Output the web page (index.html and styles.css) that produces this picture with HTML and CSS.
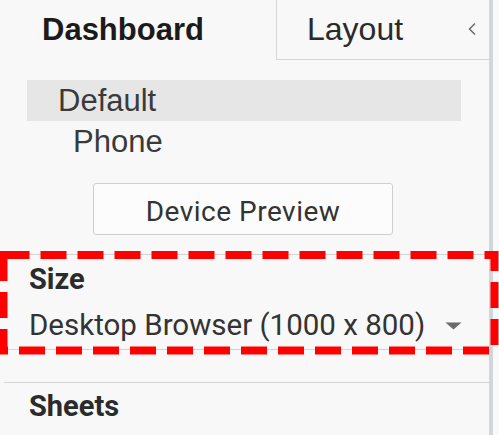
FILE: index.html
```html
<!DOCTYPE html>
<html lang="en">
<head>
<meta charset="utf-8">
<title>Dashboard pane</title>
<link rel="stylesheet" href="styles.css">
</head>
<body>
<div class="window">
  <div class="panel">
    <div class="tabs">
      <div class="tab tab-active">Dashboard</div>
      <div class="tab tab-layout">
        <span>Layout</span>
        <svg class="chev" width="10" height="14" viewBox="0 0 10 14"><path d="M8 1.5 L2.5 7 L8 12.5" fill="none" stroke="#666" stroke-width="1.4"/></svg>
      </div>
    </div>
    <div class="devices">
      <div class="device device-selected">Default</div>
      <div class="device device-sub">Phone</div>
    </div>
    <div class="preview-row">
      <button class="preview">Device Preview</button>
    </div>
    <div class="section section-size">
      <div class="section-title">Size</div>
      <div class="select">
        <span>Desktop Browser (1000 x 800)</span>
        <svg class="caret" width="17" height="8" viewBox="0 0 17 8"><path d="M0.5 0.5 H16.5 L8.5 7.5 Z" fill="#6a6a6a"/></svg>
      </div>
    </div>
    <div class="section section-sheets">
      <div class="section-title">Sheets</div>
    </div>
  </div>
  <div class="scrollbar"></div>
  <div class="spacer"></div>
  <svg class="annotation" width="499" height="435" viewBox="0 0 499 435">
    <rect x="3.5" y="255" width="491" height="95.5" fill="none" stroke="#ff0000" stroke-width="8" stroke-dasharray="26 11"/>
  </svg>
</div>
</body>
</html>
```

FILE: styles.css
```css
html, body {
  margin: 0;
  padding: 0;
}
body {
  width: 499px;
  height: 435px;
  overflow: hidden;
  background: #f8f8f8;
  color: #333;
}
.window {
  position: relative;
  display: flex;
  width: 499px;
  height: 435px;
}
.panel {
  width: 489px;
  display: flex;
  flex-direction: column;
  background: #f8f8f8;
}
.scrollbar {
  width: 4px;
  background: #d2d6da;
}
.spacer {
  flex: 1;
  background: #f9f9f9;
}
.tabs {
  display: flex;
  height: 60px;
}
.tab {
  box-sizing: border-box;
  height: 60px;
  font-family: "Liberation Sans", Arial, sans-serif;
  font-size: 31px;
}
.tab-active {
  width: 276px;
  padding-left: 42px;
  line-height: 60px;
  font-weight: bold;
  color: #1b1b1b;
}
.tab-layout {
  flex: 1;
  display: flex;
  align-items: center;
  padding-left: 30px;
  padding-right: 12px;
  border-left: 1px solid #d6d6d6;
  border-bottom: 1px solid #d6d6d6;
  line-height: 59px;
  font-size: 32px;
  color: #2a2a2a;
}
.tab-layout span {
  flex: 1;
}
.chev {
  margin-top: -1px;
}
.devices {
  margin-top: 20px;
  display: flex;
  flex-direction: column;
}
.device {
  height: 41px;
  line-height: 41px;
  margin: 0 28px 0 27px;
  font-family: "Liberation Sans", Arial, sans-serif;
  font-size: 31px;
  color: #3a3a3a;
}
.device-selected {
  background: #e6e6e6;
  padding-left: 31px;
}
.device-sub {
  padding-left: 46px;
}
.preview-row {
  margin-top: 21px;
  padding-left: 93px;
}
.preview {
  box-sizing: border-box;
  width: 300px;
  height: 52px;
  padding: 4px 0 0 0;
  border: 1px solid #cfcfcf;
  border-radius: 3px;
  background: #fcfcfc;
  font-family: Roboto, "Liberation Sans", sans-serif;
  font-size: 28px;
  letter-spacing: 0.5px;
  color: #333;
}
.section {
  margin-left: 4px;
  border-top: 1px solid #d3d3d3;
}
.section-size {
  margin-top: 19px;
  padding-top: 7px;
  padding-bottom: 4px;
  border-bottom: 1px solid #d3d3d3;
}
.section-title {
  padding-left: 25px;
  height: 34px;
  line-height: 34px;
  font-family: Roboto, "Liberation Sans", sans-serif;
  font-weight: bold;
  font-size: 29px;
  color: #2b2b2b;
}
.select {
  display: flex;
  align-items: center;
  margin-top: 9px;
  padding-left: 25px;
  height: 40px;
  line-height: 40px;
  font-family: Roboto, "Liberation Sans", sans-serif;
  font-size: 29.5px;
  color: #333;
}
.caret {
  margin-left: 20px;
  margin-top: 1px;
}
.section-sheets {
  margin-top: 32px;
  padding-top: 6px;
}
.annotation {
  position: absolute;
  left: 0;
  top: 0;
  pointer-events: none;
}
```
